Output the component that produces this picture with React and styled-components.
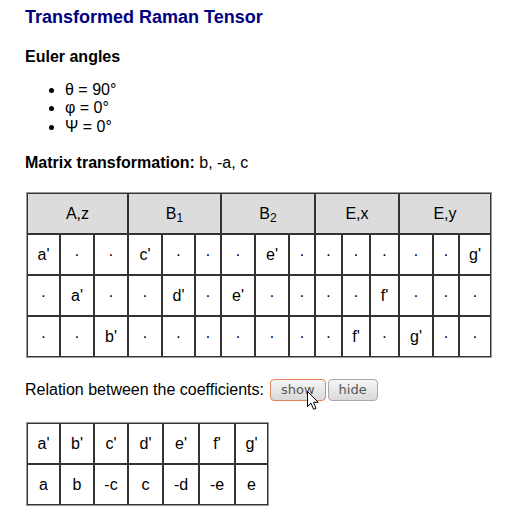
import styled, { createGlobalStyle } from "styled-components";

const GlobalStyle = createGlobalStyle`
  body {
    margin: 0;
    background: #fff;
    color: #000;
    font-family: "Liberation Sans", Arial, sans-serif;
    font-size: 16px;
  }
`;

const Page = styled.div`
  padding: 7px 25px 20px;
`;

const Title = styled.h2`
  margin: 0;
  font-size: 18px;
  line-height: 21px;
  font-weight: bold;
  color: #000080;
`;

const Heading = styled.h3`
  margin: 20px 0 0;
  font-size: 16px;
  line-height: 18px;
  font-weight: bold;
`;

const AngleList = styled.ul`
  margin: 15px 0 0;
  padding-left: 40px;
  line-height: 18.4px;
`;

const Line = styled.p`
  margin: ${({ $top }) => $top}px 0 0;
  line-height: 18.4px;
`;

const Table = styled.table`
  margin: ${({ $top }) => $top}px 0 0 1px;
  border-collapse: separate;
  border-spacing: 0;
  border: 1px solid #9a9a9a;
  table-layout: fixed;
  width: ${({ $width }) => $width}px;
`;

const Col = styled.col`
  width: ${({ $w }) => $w}px;
`;

const HeadCell = styled.th`
  border: 1px solid #333;
  background: #dcdcdc;
  padding: 10px 0;
  line-height: 19px;
  font-weight: normal;
  text-align: center;

  sub {
    font-size: 12px;
    line-height: 0;
    vertical-align: -3px;
  }
`;

const Cell = styled.td`
  border: 1px solid #333;
  padding: 10px 0;
  line-height: 19px;
  text-align: center;
`;

const Relation = styled.div`
  display: flex;
  align-items: center;
  height: 22px;
  margin-top: 21px;
`;

const ButtonWrap = styled.span`
  position: relative;
  display: inline-flex;
  margin-left: ${({ $gap }) => $gap}px;
`;

const Button = styled.button`
  height: 22px;
  padding: 0 10px;
  border: 1px solid ${({ $focused }) => ($focused ? "#e4845f" : "#a9a9a9")};
  border-radius: 4px;
  background: linear-gradient(#f6f6f6, #d9d9d9);
  color: #555;
  font-family: "DejaVu Sans", sans-serif;
  font-size: 13px;
  line-height: 20px;
  cursor: pointer;
`;

const Pointer = styled.svg`
  position: absolute;
  left: 37px;
  top: 12px;
  pointer-events: none;
`;

const columns = [33, 34, 34, 34, 33, 26, 34, 34, 26, 27, 28, 29, 34, 26, 32];

const groups = [
  { label: "A,z" },
  { label: "B", sub: "1" },
  { label: "B", sub: "2" },
  { label: "E,x" },
  { label: "E,y" },
];

const D = "·";
const rows = [
  ["a'", D, D, "c'", D, D, D, "e'", D, D, D, D, D, D, "g'"],
  [D, "a'", D, D, "d'", D, "e'", D, D, D, D, "f'", D, D, D],
  [D, D, "b'", D, D, D, D, D, D, D, "f'", D, "g'", D, D],
];

const relCols = [33, 34, 34, 35, 36, 36, 33];
const relation = [
  ["a'", "b'", "c'", "d'", "e'", "f'", "g'"],
  ["a", "b", "-c", "c", "-d", "-e", "e"],
];

function Cursor() {
  return (
    <Pointer width="13" height="20" viewBox="0 0 13 20">
      <path
        d="M0.5 0.5 L0.5 15.5 L4 12.2 L6.6 18.3 L9 17.3 L6.5 11.3 L11.2 11.3 Z"
        fill="#fff"
        stroke="#000"
        strokeWidth="1"
        strokeLinejoin="round"
      />
    </Pointer>
  );
}

export default function App() {
  return (
    <>
      <GlobalStyle />
      <Page>
        <Title>Transformed Raman Tensor</Title>

        <Heading>Euler angles</Heading>
        <AngleList>
          <li>θ = 90°</li>
          <li>φ = 0°</li>
          <li>Ψ = 0°</li>
        </AngleList>

        <Line $top={18}>
          <b>Matrix transformation:</b> b, -a, c
        </Line>

        <Table $top={19} $width={466}>
          <colgroup>
            {columns.map((w, i) => (
              <Col key={i} $w={w} />
            ))}
          </colgroup>
          <thead>
            <tr>
              {groups.map((g, i) => (
                <HeadCell key={i} colSpan={3}>
                  {g.label}
                  {g.sub && <sub>{g.sub}</sub>}
                </HeadCell>
              ))}
            </tr>
          </thead>
          <tbody>
            {rows.map((row, r) => (
              <tr key={r}>
                {row.map((v, c) => (
                  <Cell key={c}>{v}</Cell>
                ))}
              </tr>
            ))}
          </tbody>
        </Table>

        <Relation>
          <span>Relation between the coefficients:</span>
          <ButtonWrap $gap={6}>
            <Button $focused>show</Button>
            <Cursor />
          </ButtonWrap>
          <ButtonWrap $gap={2}>
            <Button>hide</Button>
          </ButtonWrap>
        </Relation>

        <Table $top={21} $width={243}>
          <colgroup>
            {relCols.map((w, i) => (
              <Col key={i} $w={w} />
            ))}
          </colgroup>
          <tbody>
            {relation.map((row, r) => (
              <tr key={r}>
                {row.map((v, c) => (
                  <Cell key={c}>{v}</Cell>
                ))}
              </tr>
            ))}
          </tbody>
        </Table>
      </Page>
    </>
  );
}
